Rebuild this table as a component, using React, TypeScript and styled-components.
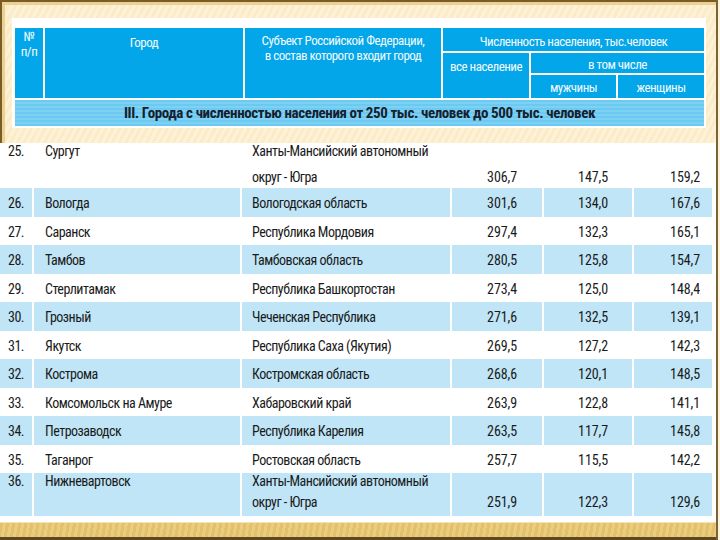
import React from "react";
import styled, { createGlobalStyle } from "styled-components";

const FONT = `"Liberation Sans Narrow", "Arial Narrow", "Roboto Condensed", "DejaVu Sans Condensed", "Liberation Sans", sans-serif`;

const GlobalStyle = createGlobalStyle`
  html, body {
    margin: 0;
    padding: 0;
    width: 720px;
    height: 540px;
    overflow: hidden;
    background: #fdf4de;
  }
  * { box-sizing: border-box; }
`;

const Frame = styled.div`
  width: 718px;
  height: 540px;
  border-right: 2px solid #7d6334;
  display: flex;
  flex-direction: column;
  font-family: ${FONT};
`;

const TopArea = styled.div`
  height: 143px;
  border-top: 2px solid #7a5c27;
  border-left: 2px solid #7a5c27;
  box-shadow: inset 3px 3px 0 #ecd194;
  background: repeating-linear-gradient(
    118deg,
    #fcecc5 0px,
    #fcecc5 3px,
    #fdf2d9 3px,
    #fdf2d9 6px
  );
  padding: 16px 0 0 10px;
`;

const HeaderPanel = styled.div`
  width: 694px;
  background: #ffffff;
  padding: 10px 2px 2px 3px;
  display: flex;
  flex-direction: column;
  gap: 2px;
`;

const HeaderGrid = styled.div`
  display: grid;
  grid-template-columns: 28px 198px 196px 86px 85px 86px;
  grid-template-rows: 23px 20px 23px;
  gap: 2px;
  background: #ffffff;
  width: 689px;
`;

const HeaderCell = styled.div<{ $col: string; $row: string; $pt?: number }>`
  grid-column: ${(p) => p.$col};
  grid-row: ${(p) => p.$row};
  background: #03a6e8;
  color: #f4fbff;
  font-size: 13px;
  line-height: 15px;
  letter-spacing: -0.5px;
  text-align: center;
  padding-top: ${(p) => p.$pt ?? 6}px;
  white-space: nowrap;
  overflow: hidden;
`;

const SectionRow = styled.div`
  width: 689px;
  height: 26px;
  background: repeating-linear-gradient(
    180deg,
    #6ccaf2 0px,
    #6ccaf2 2px,
    #7dd2f4 2px,
    #7dd2f4 4px
  );
  color: #17202e;
  font-weight: bold;
  font-size: 15px;
  line-height: 26px;
  letter-spacing: -0.4px;
  text-align: center;
  white-space: nowrap;
`;

const BodyPanel = styled.div`
  width: 716px;
  height: 379px;
  background: #ffffff;
  display: flex;
  flex-direction: column;
`;

const BodyRow = styled.div<{ $h: number }>`
  display: grid;
  grid-template-columns: 32px 206px 208px 90px 88px 78px;
  column-gap: 2px;
  height: ${(p) => p.$h}px;
`;

const Cell = styled.div<{
  $blue: boolean;
  $tall: boolean;
  $pl?: number;
  $pr?: number;
  $pb: number;
  $num?: boolean;
}>`
  background: ${(p) => (p.$blue ? "#bfe5f7" : "transparent")};
  color: #1a1a1a;
  font-size: 14px;
  line-height: 16px;
  letter-spacing: ${(p) => (p.$num ? "-0.1px" : "-0.5px")};
  display: flex;
  flex-direction: column;
  justify-content: ${(p) =>
    p.$tall ? (p.$num ? "flex-end" : "space-between") : "center"};
  align-items: ${(p) => (p.$num ? "flex-end" : "flex-start")};
  padding-left: ${(p) => p.$pl ?? 0}px;
  padding-right: ${(p) => p.$pr ?? 0}px;
  padding-top: ${(p) => (p.$tall ? 0 : 2)}px;
  padding-bottom: ${(p) => (p.$tall ? p.$pb : 0)}px;
  white-space: nowrap;
`;

const BottomBand = styled.div`
  height: 18px;
  border-top: 1px solid #f3e2b4;
  border-bottom: 3px solid #5e4820;
  background: repeating-linear-gradient(
    100deg,
    #e3c06a 0px,
    #e3c06a 3px,
    #ebcd82 3px,
    #ebcd82 6px
  );
`;

type Row = {
  n: string;
  city: string;
  region: string[];
  total: string;
  men: string;
  women: string;
};

const rows: Row[] = [
  { n: "25.", city: "Сургут", region: ["Ханты-Мансийский автономный", "округ - Югра"], total: "306,7", men: "147,5", women: "159,2" },
  { n: "26.", city: "Вологда", region: ["Вологодская область"], total: "301,6", men: "134,0", women: "167,6" },
  { n: "27.", city: "Саранск", region: ["Республика Мордовия"], total: "297,4", men: "132,3", women: "165,1" },
  { n: "28.", city: "Тамбов", region: ["Тамбовская область"], total: "280,5", men: "125,8", women: "154,7" },
  { n: "29.", city: "Стерлитамак", region: ["Республика Башкортостан"], total: "273,4", men: "125,0", women: "148,4" },
  { n: "30.", city: "Грозный", region: ["Чеченская Республика"], total: "271,6", men: "132,5", women: "139,1" },
  { n: "31.", city: "Якутск", region: ["Республика Саха (Якутия)"], total: "269,5", men: "127,2", women: "142,3" },
  { n: "32.", city: "Кострома", region: ["Костромская область"], total: "268,6", men: "120,1", women: "148,5" },
  { n: "33.", city: "Комсомольск на Амуре", region: ["Хабаровский край"], total: "263,9", men: "122,8", women: "141,1" },
  { n: "34.", city: "Петрозаводск", region: ["Республика Карелия"], total: "263,5", men: "117,7", women: "145,8" },
  { n: "35.", city: "Таганрог", region: ["Ростовская область"], total: "257,7", men: "115,5", women: "142,2" },
  { n: "36.", city: "Нижневартовск", region: ["Ханты-Мансийский автономный", "округ - Югра"], total: "251,9", men: "122,3", women: "129,6" },
];

export default function App() {
  return (
    <>
      <GlobalStyle />
      <Frame>
        <TopArea>
          <HeaderPanel>
            <HeaderGrid>
              <HeaderCell $col="1" $row="1 / 4" $pt={1}>
                №<br />п/п
              </HeaderCell>
              <HeaderCell $col="2" $row="1 / 4" $pt={7}>
                Город
              </HeaderCell>
              <HeaderCell $col="3" $row="1 / 4" $pt={5}>
                Субъект Российской Федерации,
                <br />в состав которого входит город
              </HeaderCell>
              <HeaderCell $col="4 / 7" $row="1">
                Численность населения, тыс.человек
              </HeaderCell>
              <HeaderCell $col="4" $row="2 / 4">
                все население
              </HeaderCell>
              <HeaderCell $col="5 / 7" $row="2" $pt={4}>
                в том числе
              </HeaderCell>
              <HeaderCell $col="5" $row="3" $pt={5}>
                мужчины
              </HeaderCell>
              <HeaderCell $col="6" $row="3" $pt={5}>
                женщины
              </HeaderCell>
            </HeaderGrid>
            <SectionRow>
              III. Города с численностью населения от 250 тыс. человек до 500 тыс. человек
            </SectionRow>
          </HeaderPanel>
        </TopArea>
        <BodyPanel>
          {rows.map((r, i) => {
            const tall = r.region.length > 1;
            const blue = i % 2 === 1;
            const h = i === 0 ? 45 : tall ? 43 : 28.5;
            const pb = i === 0 ? 3 : 6;
            return (
              <BodyRow key={r.n} $h={h}>
                <Cell $blue={blue} $tall={tall} $pb={pb} $pl={8}>
                  <span>{r.n}</span>
                </Cell>
                <Cell $blue={blue} $tall={tall} $pb={pb} $pl={11}>
                  <span>{r.city}</span>
                </Cell>
                <Cell $blue={blue} $tall={tall} $pb={pb} $pl={10}>
                  {r.region.map((t) => (
                    <span key={t}>{t}</span>
                  ))}
                </Cell>
                <Cell $blue={blue} $tall={tall} $pb={pb} $num $pr={25}>
                  <span>{r.total}</span>
                </Cell>
                <Cell $blue={blue} $tall={tall} $pb={pb} $num $pr={24}>
                  <span>{r.men}</span>
                </Cell>
                <Cell $blue={blue} $tall={tall} $pb={pb} $num $pr={12}>
                  <span>{r.women}</span>
                </Cell>
              </BodyRow>
            );
          })}
        </BodyPanel>
        <BottomBand />
      </Frame>
    </>
  );
}
